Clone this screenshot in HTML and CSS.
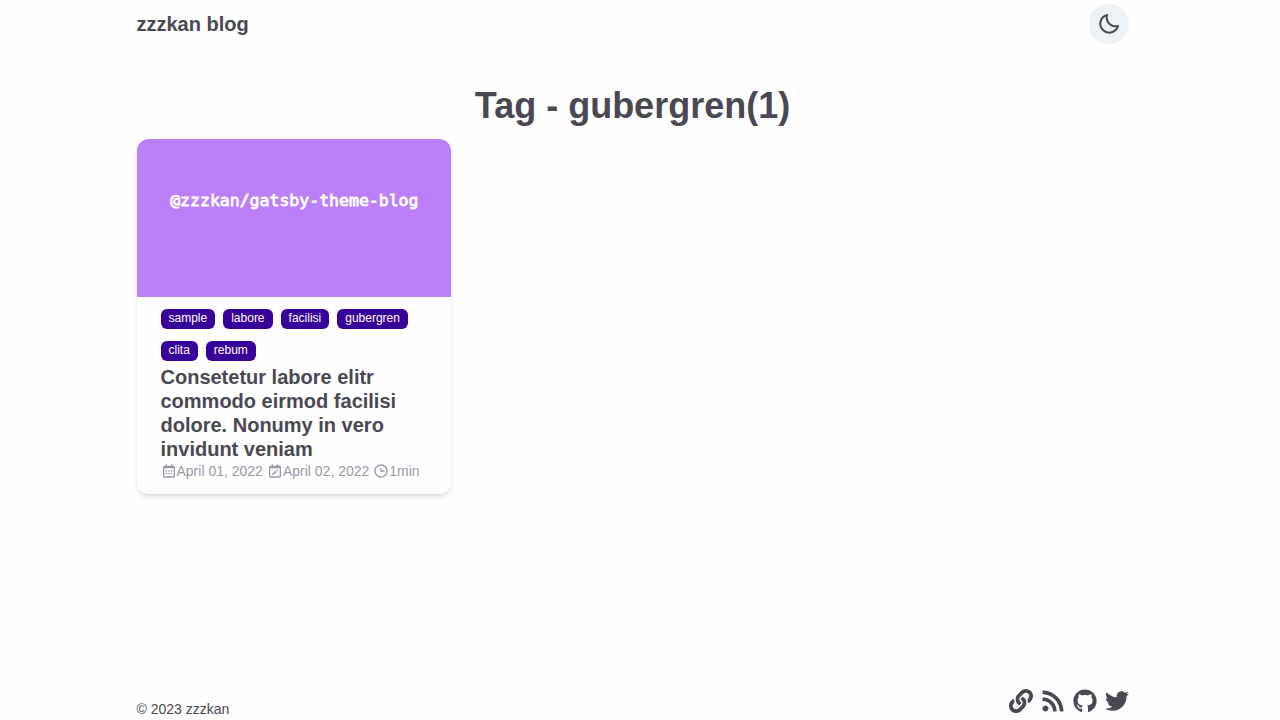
FILE: index.html
```html
<!DOCTYPE html>
<html lang="en">
<head>
<meta charset="utf-8">
<meta name="viewport" content="width=device-width, initial-scale=1">
<title>Tag - gubergren | zzzkan blog</title>
<link rel="stylesheet" href="styles.css">
</head>
<body>
<header class="container header">
  <a class="brand" href="#">zzzkan blog</a>
  <button class="theme-toggle" type="button" aria-label="Switch to dark mode">
    <svg class="icon" viewBox="0 0 24 24" aria-hidden="true"><path d="M20.742 13.045a8.088 8.088 0 0 1-2.077.271c-2.135 0-4.14-.83-5.646-2.336a8.025 8.025 0 0 1-2.064-7.723A1 1 0 0 0 9.73 2.034a10.014 10.014 0 0 0-4.489 2.582c-3.898 3.898-3.898 10.243 0 14.143a9.937 9.937 0 0 0 7.072 2.93 9.93 9.93 0 0 0 7.07-2.929 10.007 10.007 0 0 0 2.583-4.491 1.001 1.001 0 0 0-1.224-1.224zm-2.772 4.301a7.947 7.947 0 0 1-5.656 2.343 7.953 7.953 0 0 1-5.658-2.344c-3.118-3.119-3.118-8.195 0-11.314a7.923 7.923 0 0 1 2.06-1.483 10.027 10.027 0 0 0 2.89 7.848 9.972 9.972 0 0 0 7.848 2.891 8.036 8.036 0 0 1-1.484 2.059z"/></svg>
  </button>
</header>
<main class="container main">
  <h1 class="page-title">Tag - gubergren(1)</h1>
  <div class="posts">
    <article class="card">
      <svg class="cover" viewBox="0 0 1200 603" role="img" aria-label="@zzzkan/gatsby-theme-blog">
        <rect class="cover-bg" width="1200" height="603"/>
        <text class="cover-text" x="600" y="254">@zzzkan/gatsby-theme-blog</text>
      </svg>
      <div class="card-body">
        <ul class="tags">
          <li><a class="tag" href="#">sample</a></li>
          <li><a class="tag" href="#">labore</a></li>
          <li><a class="tag" href="#">facilisi</a></li>
          <li><a class="tag" href="#">gubergren</a></li>
          <li><a class="tag" href="#">clita</a></li>
          <li><a class="tag" href="#">rebum</a></li>
        </ul>
        <h2 class="card-title"><a href="#">Consetetur labore elitr commodo eirmod facilisi dolore. Nonumy in vero invidunt veniam</a></h2>
        <div class="meta">
          <span class="meta-item"><svg class="icon-small" viewBox="0 0 24 24" aria-hidden="true"><path d="M7 11h2v2H7zm0 4h2v2H7zm4-4h2v2h-2zm0 4h2v2h-2zm4-4h2v2h-2zm0 4h2v2h-2z"/><path d="M5 22h14c1.103 0 2-.897 2-2V6c0-1.103-.897-2-2-2h-2V2h-2v2H9V2H7v2H5c-1.103 0-2 .897-2 2v14c0 1.103.897 2 2 2zM19 8l.001 12H5V8h14z"/></svg><time datetime="2022-04-01">April 01, 2022</time></span>
          <span class="meta-item"><svg class="icon-small" viewBox="0 0 24 24" aria-hidden="true"><path d="M19 4h-2V2h-2v2H9V2H7v2H5c-1.103 0-2 .897-2 2v14c0 1.103.897 2 2 2h14c1.103 0 2-.897 2-2V6c0-1.103-.897-2-2-2zm.002 16H5V8h14l.002 12z"/><path d="m15.628 12.183-1.8-1.799 1.37-1.371 1.8 1.799zm-7.623 4.018V18h1.799l4.976-4.97-1.799-1.799z"/></svg><time datetime="2022-04-02">April 02, 2022</time></span>
          <span class="meta-item"><svg class="icon-small" viewBox="0 0 24 24" aria-hidden="true"><path d="M12 2C6.486 2 2 6.486 2 12s4.486 10 10 10 10-4.486 10-10S17.514 2 12 2zm0 18c-4.411 0-8-3.589-8-8s3.589-8 8-8 8 3.589 8 8-3.589 8-8 8z"/><path d="M13 7h-2v6h6v-2h-4z"/></svg>1min</span>
        </div>
      </div>
    </article>
  </div>
</main>
<footer class="container footer">
  <small class="copyright">© 2023 zzzkan</small>
  <nav class="social" aria-label="Links">
    <a href="#" aria-label="Website"><svg class="icon" viewBox="0 0 512 512" aria-hidden="true"><path d="M326.612 185.391c59.747 59.809 58.927 155.698.36 214.59-.11.12-.24.25-.36.37l-67.2 67.2c-59.27 59.27-155.699 59.262-214.96 0-59.27-59.26-59.27-155.7 0-214.96l37.106-37.106c9.84-9.84 26.786-3.3 27.294 10.606.648 17.722 3.826 35.527 9.69 52.721 1.986 5.822.567 12.262-3.783 16.612l-13.087 13.087c-28.026 28.026-28.905 73.66-1.155 101.96 28.024 28.579 74.086 28.749 102.325.51l67.2-67.19c28.191-28.191 28.073-73.757 0-101.83-3.701-3.694-7.429-6.564-10.341-8.569a16.037 16.037 0 0 1-6.947-12.606c-.396-10.567 3.348-21.456 11.698-29.806l21.054-21.055c5.521-5.521 14.182-6.199 20.584-1.731a152.482 152.482 0 0 1 20.522 17.197zM467.547 44.449c-59.261-59.262-155.69-59.27-214.96 0l-67.2 67.2c-.12.12-.25.25-.36.37-58.566 58.892-59.387 154.781.36 214.59a152.454 152.454 0 0 0 20.521 17.196c6.402 4.468 15.064 3.789 20.584-1.731l21.054-21.055c8.35-8.35 12.094-19.239 11.698-29.806a16.037 16.037 0 0 0-6.947-12.606c-2.912-2.005-6.64-4.875-10.341-8.569-28.073-28.073-28.191-73.639 0-101.83l67.2-67.19c28.239-28.239 74.3-28.069 102.325.51 27.75 28.3 26.872 73.934-1.155 101.96l-13.087 13.087c-4.35 4.35-5.769 10.79-3.783 16.612 5.864 17.194 9.042 34.999 9.69 52.721.509 13.906 17.454 20.446 27.294 10.606l37.106-37.106c59.271-59.259 59.271-155.699.001-214.959z"/></svg></a>
    <a href="#" aria-label="RSS"><svg class="icon" viewBox="0 0 448 512" aria-hidden="true"><path d="M128.081 415.959c0 35.369-28.672 64.041-64.041 64.041S0 451.328 0 415.959s28.672-64.041 64.041-64.041 64.04 28.673 64.04 64.041zm175.66 47.25c-8.354-154.6-132.185-278.587-286.95-286.95C7.656 175.765 0 183.105 0 192.253v48.069c0 8.415 6.49 15.472 14.887 16.018 111.832 7.284 201.473 96.702 208.772 208.772.547 8.397 7.604 14.887 16.018 14.887h48.069c9.149.001 16.489-7.655 15.995-16.79zm144.249.288C439.596 229.677 251.465 40.445 16.503 32.01 7.473 31.686 0 38.981 0 48.016v48.068c0 8.625 6.835 15.645 15.453 15.999 191.179 7.839 344.627 161.316 352.465 352.465.353 8.618 7.373 15.453 15.999 15.453h48.068c9.034-.001 16.329-7.474 16.005-16.504z"/></svg></a>
    <a href="#" aria-label="GitHub"><svg class="icon" viewBox="0 0 496 512" aria-hidden="true"><path d="M165.9 397.4c0 2-2.3 3.6-5.2 3.6-3.3.3-5.6-1.3-5.6-3.6 0-2 2.3-3.6 5.2-3.6 3-.3 5.6 1.3 5.6 3.6zm-31.1-4.5c-.7 2 1.3 4.3 4.3 4.9 2.6 1 5.6 0 6.2-2s-1.3-4.3-4.3-5.2c-2.6-.7-5.5.3-6.2 2.3zm44.2-1.7c-2.9.7-4.9 2.6-4.6 4.9.3 2 2.9 3.3 5.9 2.6 2.9-.7 4.9-2.6 4.6-4.6-.3-1.9-3-3.2-5.9-2.9zM244.8 8C106.1 8 0 113.3 0 252c0 110.9 69.8 205.8 169.5 239.2 12.8 2.3 17.3-5.6 17.3-12.1 0-6.2-.3-40.4-.3-61.4 0 0-70 15-84.7-29.8 0 0-11.4-29.1-27.8-36.6 0 0-22.9-15.7 1.6-15.4 0 0 24.9 2 38.6 25.8 21.9 38.6 58.6 27.5 72.9 20.9 2.3-16 8.8-27.1 16-33.7-55.9-6.2-112.3-14.3-112.3-110.5 0-27.5 7.6-41.3 23.6-58.9-2.6-6.5-11.1-33.3 2.6-67.9 20.9-6.5 69 27 69 27 20-5.6 41.5-8.5 62.8-8.5s42.8 2.9 62.8 8.5c0 0 48.1-33.6 69-27 13.7 34.7 5.2 61.4 2.6 67.9 16 17.7 25.8 31.5 25.8 58.9 0 96.5-58.9 104.2-114.8 110.5 9.2 7.9 17 22.9 17 46.4 0 33.7-.3 75.4-.3 83.6 0 6.5 4.6 14.4 17.3 12.1C428.2 457.8 496 362.9 496 252 496 113.3 383.5 8 244.8 8z"/></svg></a>
    <a href="#" aria-label="Twitter"><svg class="icon" viewBox="0 0 512 512" aria-hidden="true"><path d="M459.37 151.716c.325 4.548.325 9.097.325 13.645 0 138.72-105.583 298.558-298.558 298.558-59.452 0-114.68-17.219-161.137-47.106 8.447.974 16.568 1.299 25.34 1.299 49.055 0 94.213-16.568 130.274-44.832-46.132-.975-84.792-31.188-98.112-72.772 6.498.974 12.995 1.624 19.818 1.624 9.421 0 18.843-1.3 27.614-3.573-48.081-9.747-84.143-51.98-84.143-102.985v-1.299c13.969 7.797 30.214 12.67 47.431 13.319-28.264-18.843-46.781-51.005-46.781-87.391 0-19.492 5.197-37.36 14.294-52.954 51.655 63.675 129.3 105.258 216.365 109.807-1.624-7.797-2.599-15.918-2.599-24.04 0-57.828 46.782-104.934 104.934-104.934 30.213 0 57.502 12.67 76.67 33.137 23.715-4.548 46.456-13.32 66.599-25.34-7.798 24.366-24.366 44.833-46.132 57.827 21.117-2.273 41.584-8.122 60.426-16.243-14.292 20.791-32.161 39.308-52.628 54.253z"/></svg></a>
  </nav>
</footer>
</body>
</html>
```
FILE: styles.css
```css
*, *::before, *::after { box-sizing: border-box; }

body {
  margin: 0;
  padding-right: 15px;
  min-height: 100vh;
  display: flex;
  flex-direction: column;
  background: #fefefe;
  color: #4a4852;
  font-family: "Liberation Sans", Arial, sans-serif;
  font-size: 16px;
  line-height: 24px;
}

a { color: inherit; text-decoration: none; }

.container {
  width: 100%;
  max-width: 1024px;
  margin: 0 auto;
  padding: 0 16px;
}

.header {
  display: flex;
  align-items: center;
  justify-content: space-between;
  min-height: 48px;
}

.brand { font-size: 20px; font-weight: 700; }

.theme-toggle {
  display: flex;
  align-items: center;
  justify-content: center;
  width: 40px;
  height: 40px;
  padding: 0;
  border: 0;
  border-radius: 50%;
  background: #edf2f7;
  color: inherit;
  cursor: pointer;
}

.icon { display: block; width: 24px; height: 24px; fill: currentColor; }

.main { flex: 1; padding-top: 36px; }

.page-title {
  margin: 0 0 12px;
  font-size: 36px;
  line-height: 43px;
  text-align: center;
}

.posts {
  display: grid;
  grid-template-columns: repeat(auto-fill, minmax(280px, 1fr));
  gap: 24px;
}

.card {
  overflow: hidden;
  border-radius: 12px;
  background: #fefefe;
  box-shadow: 0 4px 6px -1px rgba(0, 0, 0, 0.1), 0 2px 4px -1px rgba(0, 0, 0, 0.06);
}

.cover { display: block; width: 100%; }
.cover-bg { fill: #bb80f9; }
.cover-text {
  fill: #fff;
  stroke: #fff;
  stroke-width: 3px;
  font-family: "DejaVu Sans Mono", monospace;
  font-size: 63px;
  text-anchor: middle;
}

.card-body { padding: 12px 24px; }

.tags {
  display: flex;
  flex-wrap: wrap;
  gap: 12px 8px;
  margin: 0 0 4px;
  padding: 0;
  list-style: none;
}

.tag {
  display: block;
  height: 20px;
  padding: 0 8px;
  border-radius: 6px;
  background: #370099;
  color: #fff;
  font-size: 12px;
  line-height: 18px;
}

.card-title { margin: 0; font-size: 20px; line-height: 24px; }

.meta {
  display: flex;
  flex-wrap: wrap;
  gap: 0 4px;
  color: #9a99a6;
  font-size: 14px;
  line-height: 21px;
}

.meta-item { display: flex; align-items: flex-start; }
.icon-small { width: 16px; height: 16px; margin-top: 2px; fill: currentColor; }

.footer {
  display: flex;
  align-items: flex-end;
  justify-content: space-between;
}

.copyright { font-size: 14px; line-height: 21px; }
.social { display: flex; gap: 8px; padding-bottom: 7px; }
```
